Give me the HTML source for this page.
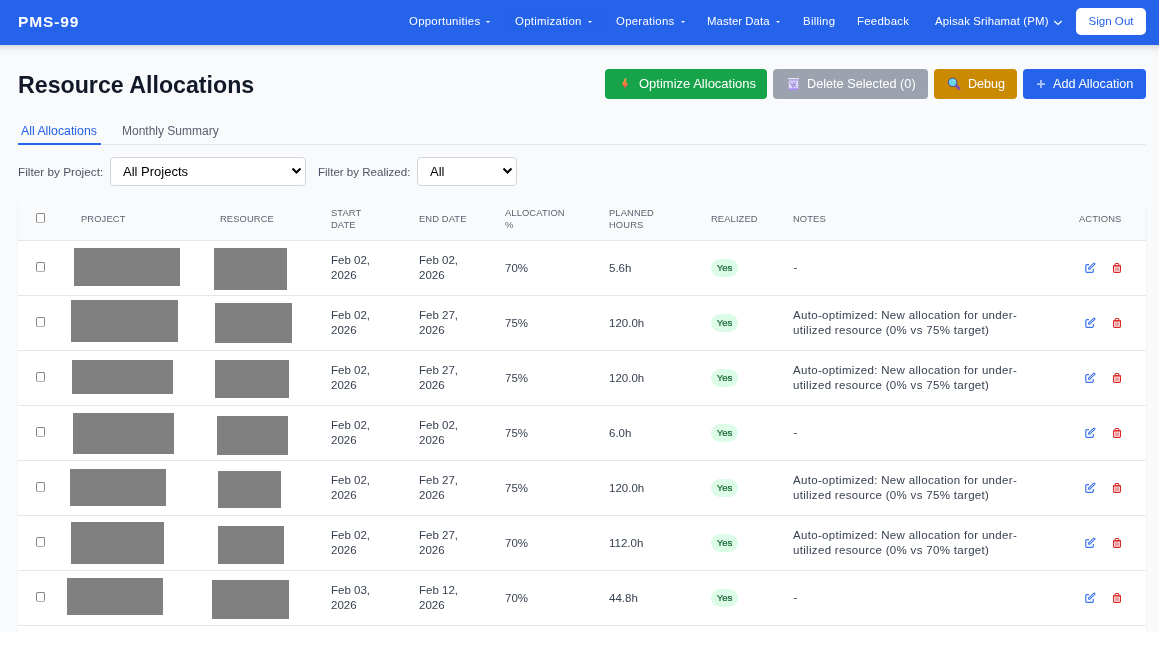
<!DOCTYPE html>
<html><head><meta charset="utf-8">
<style>
*{box-sizing:border-box;margin:0;padding:0}
html,body{width:1159px;height:651px;overflow:hidden;background:#fff;font-family:"Liberation Sans",sans-serif}
.bg{position:absolute;left:0;top:0;width:1159px;height:632px;background:#f9fafb}
.hdr{position:absolute;left:0;top:0;width:1159px;height:45px;background:#2563eb;z-index:5}
.hsh{position:absolute;left:-30px;top:0;width:1219px;height:45px;background:#2563eb;box-shadow:0 4px 8px -1px rgba(0,0,0,.11),0 2px 4px -1px rgba(0,0,0,.07);z-index:4}
.abs{position:absolute;white-space:nowrap}
.logo{left:18px;top:13px;font-size:15.5px;font-weight:bold;color:#fff;letter-spacing:.9px;line-height:18px}
.nav{top:14px;font-size:11.4px;letter-spacing:.28px;color:#fff;line-height:14px}
.caret{display:inline-block;width:0;height:0;border-left:2px solid transparent;border-right:2px solid transparent;border-top:2.5px solid #fff;vertical-align:middle;margin-left:6px;position:relative;top:0}
.active{background:#1d4ed8;}
.signout{left:1076px;top:8px;width:70px;height:27px;background:#fff;border-radius:5px;color:#2563eb;font-size:11.6px;line-height:26px;text-align:center}
.title{left:18px;top:71px;font-size:23.2px;font-weight:bold;color:#111827;line-height:28px}
.btn{top:69px;height:30px;border-radius:4px;color:#fff;font-size:13px;line-height:30px}
.tabs-line{left:18px;top:144px;width:1128px;height:1px;background:#e5e7eb}
.tab{top:124px;font-size:12.3px;line-height:14px}
.flabel{top:166px;font-size:11.8px;color:#4b5563;line-height:13px}
.sel{top:157px;height:29px;background:#fff;border:1px solid #d1d5db;border-radius:4px;font-size:13px;color:#000;line-height:27px;padding-left:12px}
.card{left:18px;top:198px;width:1128px;height:434px;background:#fff;border-radius:6px 6px 0 0;overflow:hidden;box-shadow:0 1px 2px rgba(0,0,0,.05),0 0 0 1px rgba(0,0,0,.012)}
.thead{position:absolute;left:0;top:0;width:1128px;height:43px;background:#f9fafb;border-bottom:1px solid #e5e7eb}
.th{font-size:9.4px;color:#5b6472;letter-spacing:.1px;line-height:12px}
.cb{position:absolute;width:9px;height:10px;border:1px solid #858585;border-bottom-color:#b0b0b0;border-radius:2px;background:#fff}
.row{position:absolute;left:0;width:1128px;height:55px;border-bottom:1px solid #e5e7eb}
.td{font-size:11.5px;color:#374151;line-height:15px}
.blk{position:absolute;background:#808080}
.yes{position:absolute;left:693px;width:27px;height:18px;border-radius:9px;background:#dcfce7;color:#166534;font-size:9.6px;font-weight:normal;text-align:center;line-height:18px;-webkit-text-stroke:.2px #166534}
</style></head><body>
<div style="position:absolute;left:0;top:0;width:1159px;height:651px;overflow:hidden;will-change:transform">
<div class="bg"></div>
<div class="hsh"></div>
<div class="hdr">
  <div class="abs logo">PMS-99</div>
  <div class="abs nav" style="left:409px">Opportunities<span class="caret"></span></div>
  <div class="abs active" style="left:505px;top:8px;width:99px;height:26px;border-radius:5px;background:rgba(29,78,216,.07)"></div>
  <div class="abs nav" style="left:515px">Optimization<span class="caret"></span></div>
  <div class="abs nav" style="left:616px">Operations<span class="caret"></span></div>
  <div class="abs nav" style="left:707px;letter-spacing:.05px">Master Data<span class="caret"></span></div>
  <div class="abs nav" style="left:803px">Billing</div>
  <div class="abs nav" style="left:857px">Feedback</div>
  <div class="abs nav" style="left:935px;font-size:11.4px;letter-spacing:.14px">Apisak Srihamat (PM)</div>
  <svg class="abs" style="left:1053px;top:19px" width="10" height="7" viewBox="0 0 10 7"><path d="M1.3 2L5 5.4L8.7 2" fill="none" stroke="#fff" stroke-width="1.3"/></svg>
  <div class="abs signout">Sign Out</div>
</div>

<div class="abs title">Resource Allocations</div>
<div class="abs btn" style="left:605px;width:162px;background:#16a34a"></div>
<div class="abs btn" style="left:773px;width:155px;background:#9ca3af"></div>
<div class="abs btn" style="left:934px;width:83px;background:#ca8a04"></div>
<div class="abs btn" style="left:1023px;width:123px;background:#2563eb"></div>
<div class="abs btn" style="left:639px;top:69px">Optimize Allocations</div>
<div class="abs btn" style="left:807px;font-size:12.7px">Delete Selected (0)</div>
<div class="abs btn" style="left:968px;font-size:12.6px">Debug</div>
<div class="abs btn" style="left:1053px;font-size:12.7px">Add Allocation</div>

<svg class="abs" style="left:621px;top:77px" width="8" height="13" viewBox="0 0 8 13"><defs><linearGradient id="lg" x1="0" y1="0" x2="0" y2="1"><stop offset="0" stop-color="#fbb040"/><stop offset=".5" stop-color="#f97b3d"/><stop offset="1" stop-color="#f43f5e"/></linearGradient></defs><path d="M4 1.2L5.3 1L5.1 5.9L7.1 6.2L6.1 8.2L4.4 10.6L3.3 12L3.2 8.6L1 8.1L1.6 6L3 3.4Z" fill="url(#lg)"/></svg>
<svg class="abs" style="left:787px;top:77px" width="13" height="14" viewBox="0 0 13 14"><rect x="1" y="1" width="11" height="1.5" fill="#e5e7eb"/><rect x="1.5" y="2.5" width="10" height="1" fill="#a78bfa"/><rect x="1.8" y="3.5" width="9.4" height="8.5" fill="#ddd6fe"/><path d="M3 4.5l3 6M6 4.5l3 6M9 4.5l-3 6M4.5 7.5h4" stroke="#8b7cc8" stroke-width=".8" fill="none"/><rect x="2" y="11.3" width="9" height="1.7" fill="#a78bfa"/></svg>
<svg class="abs" style="left:947px;top:77px" width="14" height="14" viewBox="0 0 14 14"><path d="M9.3 8.8L12 11.6" stroke="#7c4dbb" stroke-width="2.8" stroke-linecap="round"/><circle cx="5.6" cy="5.3" r="4.3" fill="#67d4f0" stroke="#4a3a8c" stroke-width=".9"/><circle cx="7.2" cy="3.8" r=".7" fill="#d6f3fb"/></svg>
<svg class="abs" style="left:1036px;top:79px" width="10" height="10" viewBox="0 0 10 10"><path d="M5 1v8M1 5h8" stroke="#b2c7f6" stroke-width="1.75"/></svg>
<div class="abs tabs-line"></div>
<div class="abs" style="left:18px;top:143px;width:83px;height:2px;background:#2563eb"></div>
<div class="abs tab" style="left:21px;color:#2563eb">All Allocations</div>
<div class="abs tab" style="left:122px;color:#596170;font-size:12px">Monthly Summary</div>

<div class="abs flabel" style="left:18px">Filter by Project:</div>
<div class="abs sel" style="left:110px;width:196px">All Projects</div>
<div class="abs flabel" style="left:318px;font-size:11.55px">Filter by Realized:</div>
<div class="abs sel" style="left:417px;width:100px">All</div>
<svg class="abs" style="left:290px;top:166px" width="13" height="10" viewBox="0 0 13 10"><path d="M2.5 2.5L6.5 6.5L10.5 2.5" fill="none" stroke="#000" stroke-width="2"/></svg>
<svg class="abs" style="left:501px;top:166px" width="13" height="10" viewBox="0 0 13 10"><path d="M2.5 2.5L6.5 6.5L10.5 2.5" fill="none" stroke="#000" stroke-width="2"/></svg>

<div class="abs card">
  <div class="thead">
    <div class="cb" style="left:18px;top:15px"></div>
    <div class="abs th" style="left:63px;top:15px">PROJECT</div>
    <div class="abs th" style="left:202px;top:15px">RESOURCE</div>
    <div class="abs th" style="left:313px;top:9px">START<br>DATE</div>
    <div class="abs th" style="left:401px;top:15px">END DATE</div>
    <div class="abs th" style="left:487px;top:9px">ALLOCATION<br>%</div>
    <div class="abs th" style="left:591px;top:9px">PLANNED<br>HOURS</div>
    <div class="abs th" style="left:693px;top:15px">REALIZED</div>
    <div class="abs th" style="left:775px;top:15px">NOTES</div>
    <div class="abs th" style="left:1061px;top:15px">ACTIONS</div>
  </div>
  <div class="row" style="top:43px">
<div class="cb" style="left:18px;top:21px"></div>
<div class="blk" style="left:56px;top:7px;width:106px;height:38px"></div>
<div class="blk" style="left:196px;top:7px;width:73px;height:42px"></div>
<div class="abs td" style="left:313px;top:12px">Feb 02,<br>2026</div>
<div class="abs td" style="left:401px;top:12px">Feb 02,<br>2026</div>
<div class="abs td" style="left:487px;top:20px">70%</div>
<div class="abs td" style="left:591px;top:20px">5.6h</div>
<div class="yes" style="top:18px">Yes</div>
<div class="abs td" style="left:775.5px;top:18.5px">-</div>
<svg class="abs" style="left:1066px;top:21px" width="12" height="12" viewBox="0 0 12 12"><path d="M5 2.6H3Q1.8 2.6 1.8 3.8V9.3Q1.8 10.4 2.9 10.4H8.2Q9.3 10.4 9.3 9.3V6.9" fill="none" stroke="#3b72ee" stroke-width="1.2"/><path d="M5.3 6.5L10.1 1.9" fill="none" stroke="#3b72ee" stroke-width="2.7" stroke-linecap="round"/><path d="M5.5 6.3L9.9 2.1" fill="none" stroke="#fff" stroke-width=".85" stroke-linecap="round"/></svg>
<svg class="abs" style="left:1094px;top:21px" width="10" height="12" viewBox="0 0 10 12"><rect x="3.1" y="1.5" width="3.8" height="2.3" rx="1.1" fill="none" stroke="#dc2626" stroke-width="1.1"/><rect x="1" y="3.2" width="8" height="1.3" fill="#dc2626"/><path d="M1.6 4V9.3Q1.6 10.4 2.7 10.4H7.3Q8.4 10.4 8.4 9.3V4" fill="none" stroke="#dc2626" stroke-width="1.2"/><rect x="3" y="5.3" width="4" height="3.6" fill="#ee9a9a"/></svg>
</div>
<div class="row" style="top:98px">
<div class="cb" style="left:18px;top:21px"></div>
<div class="blk" style="left:53px;top:4px;width:107px;height:42px"></div>
<div class="blk" style="left:197px;top:7px;width:77px;height:40px"></div>
<div class="abs td" style="left:313px;top:12px">Feb 02,<br>2026</div>
<div class="abs td" style="left:401px;top:12px">Feb 27,<br>2026</div>
<div class="abs td" style="left:487px;top:20px">75%</div>
<div class="abs td" style="left:591px;top:20px">120.0h</div>
<div class="yes" style="top:18px">Yes</div>
<div class="abs td" style="left:775px;top:11.5px;letter-spacing:.32px">Auto-optimized: New allocation for under-<br>utilized resource (0% vs 75% target)</div>
<svg class="abs" style="left:1066px;top:21px" width="12" height="12" viewBox="0 0 12 12"><path d="M5 2.6H3Q1.8 2.6 1.8 3.8V9.3Q1.8 10.4 2.9 10.4H8.2Q9.3 10.4 9.3 9.3V6.9" fill="none" stroke="#3b72ee" stroke-width="1.2"/><path d="M5.3 6.5L10.1 1.9" fill="none" stroke="#3b72ee" stroke-width="2.7" stroke-linecap="round"/><path d="M5.5 6.3L9.9 2.1" fill="none" stroke="#fff" stroke-width=".85" stroke-linecap="round"/></svg>
<svg class="abs" style="left:1094px;top:21px" width="10" height="12" viewBox="0 0 10 12"><rect x="3.1" y="1.5" width="3.8" height="2.3" rx="1.1" fill="none" stroke="#dc2626" stroke-width="1.1"/><rect x="1" y="3.2" width="8" height="1.3" fill="#dc2626"/><path d="M1.6 4V9.3Q1.6 10.4 2.7 10.4H7.3Q8.4 10.4 8.4 9.3V4" fill="none" stroke="#dc2626" stroke-width="1.2"/><rect x="3" y="5.3" width="4" height="3.6" fill="#ee9a9a"/></svg>
</div>
<div class="row" style="top:153px">
<div class="cb" style="left:18px;top:21px"></div>
<div class="blk" style="left:54px;top:9px;width:101px;height:34px"></div>
<div class="blk" style="left:197px;top:9px;width:74px;height:38px"></div>
<div class="abs td" style="left:313px;top:12px">Feb 02,<br>2026</div>
<div class="abs td" style="left:401px;top:12px">Feb 27,<br>2026</div>
<div class="abs td" style="left:487px;top:20px">75%</div>
<div class="abs td" style="left:591px;top:20px">120.0h</div>
<div class="yes" style="top:18px">Yes</div>
<div class="abs td" style="left:775px;top:11.5px;letter-spacing:.32px">Auto-optimized: New allocation for under-<br>utilized resource (0% vs 75% target)</div>
<svg class="abs" style="left:1066px;top:21px" width="12" height="12" viewBox="0 0 12 12"><path d="M5 2.6H3Q1.8 2.6 1.8 3.8V9.3Q1.8 10.4 2.9 10.4H8.2Q9.3 10.4 9.3 9.3V6.9" fill="none" stroke="#3b72ee" stroke-width="1.2"/><path d="M5.3 6.5L10.1 1.9" fill="none" stroke="#3b72ee" stroke-width="2.7" stroke-linecap="round"/><path d="M5.5 6.3L9.9 2.1" fill="none" stroke="#fff" stroke-width=".85" stroke-linecap="round"/></svg>
<svg class="abs" style="left:1094px;top:21px" width="10" height="12" viewBox="0 0 10 12"><rect x="3.1" y="1.5" width="3.8" height="2.3" rx="1.1" fill="none" stroke="#dc2626" stroke-width="1.1"/><rect x="1" y="3.2" width="8" height="1.3" fill="#dc2626"/><path d="M1.6 4V9.3Q1.6 10.4 2.7 10.4H7.3Q8.4 10.4 8.4 9.3V4" fill="none" stroke="#dc2626" stroke-width="1.2"/><rect x="3" y="5.3" width="4" height="3.6" fill="#ee9a9a"/></svg>
</div>
<div class="row" style="top:208px">
<div class="cb" style="left:18px;top:21px"></div>
<div class="blk" style="left:55px;top:7px;width:101px;height:41px"></div>
<div class="blk" style="left:199px;top:10px;width:71px;height:39px"></div>
<div class="abs td" style="left:313px;top:12px">Feb 02,<br>2026</div>
<div class="abs td" style="left:401px;top:12px">Feb 02,<br>2026</div>
<div class="abs td" style="left:487px;top:20px">75%</div>
<div class="abs td" style="left:591px;top:20px">6.0h</div>
<div class="yes" style="top:18px">Yes</div>
<div class="abs td" style="left:775.5px;top:18.5px">-</div>
<svg class="abs" style="left:1066px;top:21px" width="12" height="12" viewBox="0 0 12 12"><path d="M5 2.6H3Q1.8 2.6 1.8 3.8V9.3Q1.8 10.4 2.9 10.4H8.2Q9.3 10.4 9.3 9.3V6.9" fill="none" stroke="#3b72ee" stroke-width="1.2"/><path d="M5.3 6.5L10.1 1.9" fill="none" stroke="#3b72ee" stroke-width="2.7" stroke-linecap="round"/><path d="M5.5 6.3L9.9 2.1" fill="none" stroke="#fff" stroke-width=".85" stroke-linecap="round"/></svg>
<svg class="abs" style="left:1094px;top:21px" width="10" height="12" viewBox="0 0 10 12"><rect x="3.1" y="1.5" width="3.8" height="2.3" rx="1.1" fill="none" stroke="#dc2626" stroke-width="1.1"/><rect x="1" y="3.2" width="8" height="1.3" fill="#dc2626"/><path d="M1.6 4V9.3Q1.6 10.4 2.7 10.4H7.3Q8.4 10.4 8.4 9.3V4" fill="none" stroke="#dc2626" stroke-width="1.2"/><rect x="3" y="5.3" width="4" height="3.6" fill="#ee9a9a"/></svg>
</div>
<div class="row" style="top:263px">
<div class="cb" style="left:18px;top:21px"></div>
<div class="blk" style="left:52px;top:8px;width:96px;height:37px"></div>
<div class="blk" style="left:200px;top:10px;width:63px;height:37px"></div>
<div class="abs td" style="left:313px;top:12px">Feb 02,<br>2026</div>
<div class="abs td" style="left:401px;top:12px">Feb 27,<br>2026</div>
<div class="abs td" style="left:487px;top:20px">75%</div>
<div class="abs td" style="left:591px;top:20px">120.0h</div>
<div class="yes" style="top:18px">Yes</div>
<div class="abs td" style="left:775px;top:11.5px;letter-spacing:.32px">Auto-optimized: New allocation for under-<br>utilized resource (0% vs 75% target)</div>
<svg class="abs" style="left:1066px;top:21px" width="12" height="12" viewBox="0 0 12 12"><path d="M5 2.6H3Q1.8 2.6 1.8 3.8V9.3Q1.8 10.4 2.9 10.4H8.2Q9.3 10.4 9.3 9.3V6.9" fill="none" stroke="#3b72ee" stroke-width="1.2"/><path d="M5.3 6.5L10.1 1.9" fill="none" stroke="#3b72ee" stroke-width="2.7" stroke-linecap="round"/><path d="M5.5 6.3L9.9 2.1" fill="none" stroke="#fff" stroke-width=".85" stroke-linecap="round"/></svg>
<svg class="abs" style="left:1094px;top:21px" width="10" height="12" viewBox="0 0 10 12"><rect x="3.1" y="1.5" width="3.8" height="2.3" rx="1.1" fill="none" stroke="#dc2626" stroke-width="1.1"/><rect x="1" y="3.2" width="8" height="1.3" fill="#dc2626"/><path d="M1.6 4V9.3Q1.6 10.4 2.7 10.4H7.3Q8.4 10.4 8.4 9.3V4" fill="none" stroke="#dc2626" stroke-width="1.2"/><rect x="3" y="5.3" width="4" height="3.6" fill="#ee9a9a"/></svg>
</div>
<div class="row" style="top:318px">
<div class="cb" style="left:18px;top:21px"></div>
<div class="blk" style="left:53px;top:6px;width:93px;height:42px"></div>
<div class="blk" style="left:200px;top:10px;width:66px;height:38px"></div>
<div class="abs td" style="left:313px;top:12px">Feb 02,<br>2026</div>
<div class="abs td" style="left:401px;top:12px">Feb 27,<br>2026</div>
<div class="abs td" style="left:487px;top:20px">70%</div>
<div class="abs td" style="left:591px;top:20px">112.0h</div>
<div class="yes" style="top:18px">Yes</div>
<div class="abs td" style="left:775px;top:11.5px;letter-spacing:.32px">Auto-optimized: New allocation for under-<br>utilized resource (0% vs 70% target)</div>
<svg class="abs" style="left:1066px;top:21px" width="12" height="12" viewBox="0 0 12 12"><path d="M5 2.6H3Q1.8 2.6 1.8 3.8V9.3Q1.8 10.4 2.9 10.4H8.2Q9.3 10.4 9.3 9.3V6.9" fill="none" stroke="#3b72ee" stroke-width="1.2"/><path d="M5.3 6.5L10.1 1.9" fill="none" stroke="#3b72ee" stroke-width="2.7" stroke-linecap="round"/><path d="M5.5 6.3L9.9 2.1" fill="none" stroke="#fff" stroke-width=".85" stroke-linecap="round"/></svg>
<svg class="abs" style="left:1094px;top:21px" width="10" height="12" viewBox="0 0 10 12"><rect x="3.1" y="1.5" width="3.8" height="2.3" rx="1.1" fill="none" stroke="#dc2626" stroke-width="1.1"/><rect x="1" y="3.2" width="8" height="1.3" fill="#dc2626"/><path d="M1.6 4V9.3Q1.6 10.4 2.7 10.4H7.3Q8.4 10.4 8.4 9.3V4" fill="none" stroke="#dc2626" stroke-width="1.2"/><rect x="3" y="5.3" width="4" height="3.6" fill="#ee9a9a"/></svg>
</div>
<div class="row" style="top:373px">
<div class="cb" style="left:18px;top:21px"></div>
<div class="blk" style="left:49px;top:7px;width:96px;height:37px"></div>
<div class="blk" style="left:194px;top:9px;width:77px;height:39px"></div>
<div class="abs td" style="left:313px;top:12px">Feb 03,<br>2026</div>
<div class="abs td" style="left:401px;top:12px">Feb 12,<br>2026</div>
<div class="abs td" style="left:487px;top:20px">70%</div>
<div class="abs td" style="left:591px;top:20px">44.8h</div>
<div class="yes" style="top:18px">Yes</div>
<div class="abs td" style="left:775.5px;top:18.5px">-</div>
<svg class="abs" style="left:1066px;top:21px" width="12" height="12" viewBox="0 0 12 12"><path d="M5 2.6H3Q1.8 2.6 1.8 3.8V9.3Q1.8 10.4 2.9 10.4H8.2Q9.3 10.4 9.3 9.3V6.9" fill="none" stroke="#3b72ee" stroke-width="1.2"/><path d="M5.3 6.5L10.1 1.9" fill="none" stroke="#3b72ee" stroke-width="2.7" stroke-linecap="round"/><path d="M5.5 6.3L9.9 2.1" fill="none" stroke="#fff" stroke-width=".85" stroke-linecap="round"/></svg>
<svg class="abs" style="left:1094px;top:21px" width="10" height="12" viewBox="0 0 10 12"><rect x="3.1" y="1.5" width="3.8" height="2.3" rx="1.1" fill="none" stroke="#dc2626" stroke-width="1.1"/><rect x="1" y="3.2" width="8" height="1.3" fill="#dc2626"/><path d="M1.6 4V9.3Q1.6 10.4 2.7 10.4H7.3Q8.4 10.4 8.4 9.3V4" fill="none" stroke="#dc2626" stroke-width="1.2"/><rect x="3" y="5.3" width="4" height="3.6" fill="#ee9a9a"/></svg>
</div>
<div class="row" style="top:428px">
</div>
</div>
<div class="abs" style="left:0;top:632px;width:1159px;height:19px;background:#fff;z-index:10"></div>
</div>
</body></html>
